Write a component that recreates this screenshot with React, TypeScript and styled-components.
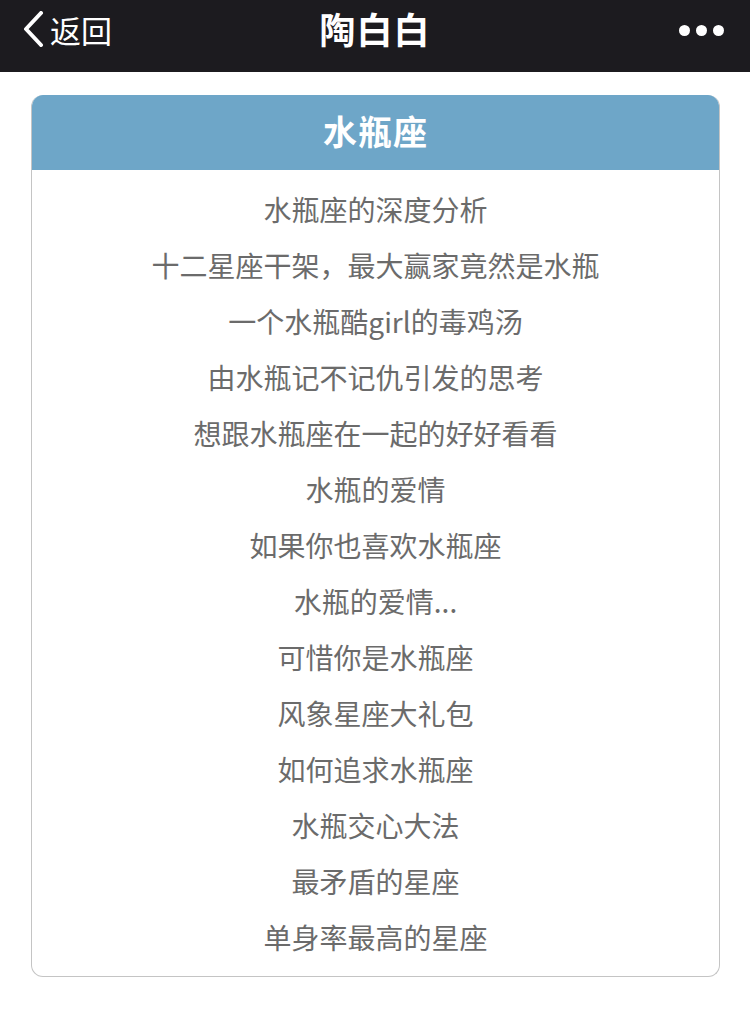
import styled, { createGlobalStyle } from "styled-components";

const topics = [
  "水瓶座的深度分析",
  "十二星座干架，最大赢家竟然是水瓶",
  "一个水瓶酷girl的毒鸡汤",
  "由水瓶记不记仇引发的思考",
  "想跟水瓶座在一起的好好看看",
  "水瓶的爱情",
  "如果你也喜欢水瓶座",
  "水瓶的爱情...",
  "可惜你是水瓶座",
  "风象星座大礼包",
  "如何追求水瓶座",
  "水瓶交心大法",
  "最矛盾的星座",
  "单身率最高的星座",
];

const GlobalStyle = createGlobalStyle`
  html, body {
    margin: 0;
    padding: 0;
    background: #ffffff;
  }
  body {
    font-family: "Noto Sans CJK SC", "Noto Sans", sans-serif;
  }
`;

export default function App() {
  return (
    <>
      <GlobalStyle />
      <Page>
        <NavBar>
          <BackButton>
            <svg width="22" height="36" viewBox="0 0 22 36">
              <polyline
                points="19,2 4,18 19,34"
                fill="none"
                stroke="#ffffff"
                strokeWidth="4"
                strokeLinecap="round"
                strokeLinejoin="round"
              />
            </svg>
            <BackText>返回</BackText>
          </BackButton>
          <NavTitle>陶白白</NavTitle>
          <MoreButton>
            <Dot />
            <Dot />
            <Dot />
          </MoreButton>
        </NavBar>

        <Card>
          <CardHead>水瓶座</CardHead>
          <TopicList>
            {topics.map((t) => (
              <TopicItem key={t}>{t}</TopicItem>
            ))}
          </TopicList>
        </Card>
      </Page>
    </>
  );
}

const Page = styled.div`
  width: 750px;
  min-height: 1035px;
  background: #ffffff;
`;

const NavBar = styled.header`
  height: 72px;
  background: #1c1b1f;
  display: flex;
  align-items: center;
  justify-content: space-between;
  padding: 0 26px 14px 22px;
  box-sizing: border-box;
  position: relative;
`;

const BackButton = styled.div`
  display: flex;
  align-items: center;
  gap: 6px;
  color: #ffffff;
`;

const BackText = styled.span`
  font-size: 31px;
  line-height: 1;
  color: #ffffff;
`;

const NavTitle = styled.h1`
  position: absolute;
  left: 0;
  right: 0;
  top: 0;
  margin: 0;
  height: 56px;
  display: flex;
  align-items: center;
  justify-content: center;
  font-size: 36px;
  font-weight: 700;
  color: #ffffff;
  letter-spacing: 1px;
  pointer-events: none;
`;

const MoreButton = styled.div`
  display: flex;
  gap: 6px;
  margin-top: 2px;
`;

const Dot = styled.span`
  width: 11px;
  height: 11px;
  border-radius: 50%;
  background: #ffffff;
`;

const Card = styled.section`
  margin: 23px 30px 0 31px;
  border: 1px solid #c4c4c4;
  border-top: none;
  border-radius: 12px;
  overflow: hidden;
  background: #ffffff;
`;

const CardHead = styled.div`
  height: 75px;
  background: #6ea6c8;
  display: flex;
  align-items: center;
  justify-content: center;
  color: #ffffff;
  font-size: 34px;
  font-weight: 700;
  letter-spacing: 1px;
  padding-bottom: 4px;
  box-sizing: border-box;
`;

const TopicList = styled.ul`
  list-style: none;
  margin: 0;
  padding: 11px 0 11px;
`;

const TopicItem = styled.li`
  height: 56px;
  line-height: 56px;
  text-align: center;
  font-size: 28px;
  color: #6b6b6b;
`;
